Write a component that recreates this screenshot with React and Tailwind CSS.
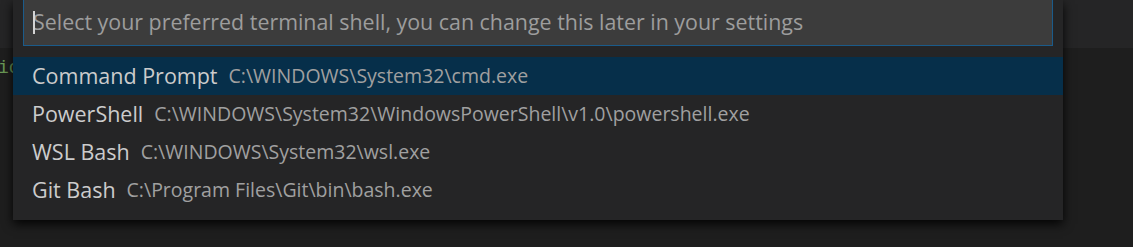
import React from "react";

const items = [
  { label: "Command Prompt", desc: "C:\\WINDOWS\\System32\\cmd.exe", selected: true },
  { label: "PowerShell", desc: "C:\\WINDOWS\\System32\\WindowsPowerShell\\v1.0\\powershell.exe" },
  { label: "WSL Bash", desc: "C:\\WINDOWS\\System32\\wsl.exe" },
  { label: "Git Bash", desc: "C:\\Program Files\\Git\\bin\\bash.exe" },
];

export default function App() {
  return (
    <div className="relative w-[1133px] h-[247px] overflow-hidden bg-[#1e1e1e]" style={{ fontFamily: '"Open Sans", "Noto Sans", sans-serif' }}>
      <div className="h-[48px] bg-[#252526]" />
      <div className="pt-[9px] text-[18px] leading-[22px] text-[#6a9955] -ml-[2px]" style={{ fontFamily: '"Liberation Mono", monospace' }}>
        io
      </div>

      <div className="absolute left-[13px] top-0 w-[1050px] bg-[#252526] pb-[11px] shadow-[0_4px_10px_rgba(0,0,0,0.9)]">
        <div className="mx-[10px] h-[46px] bg-[#3c3c3c] border-x border-b border-[#1b5b8a] flex items-center pl-[9px]">
          <span className="w-[2px] h-[23px] bg-[#d4d4d4] -mr-[2px] relative z-10" />
          <span className="text-[21.4px] text-[#9d9d9d] whitespace-nowrap">
            Select your preferred terminal shell, you can change this later in your settings
          </span>
        </div>
        <div className="mt-[11px]">
          {items.map((it) => (
            <div
              key={it.label}
              className={`h-[38px] flex items-center pl-[19px] whitespace-nowrap ${it.selected ? "bg-[#062f4a]" : ""}`}
            >
              <span className="text-[21.5px] text-[#cccccc]">{it.label}</span>
              <span className="ml-[11px] text-[19.5px] text-[#a0a0a0]">{it.desc}</span>
            </div>
          ))}
        </div>
      </div>
    </div>
  );
}
